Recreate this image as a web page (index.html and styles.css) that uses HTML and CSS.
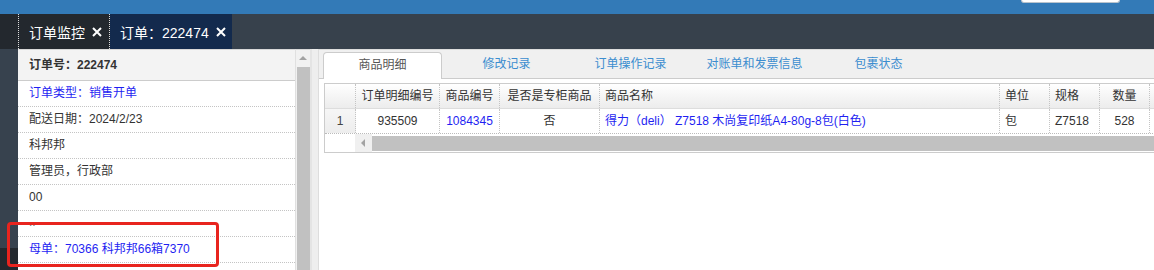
FILE: index.html
```html
<!DOCTYPE html>
<html lang="zh">
<head>
    <meta charset="UTF-8">
    <title>订单：222474</title>
    <link rel="stylesheet" href="styles.css">
</head>
<body>
    <!-- Barra superior -->
    <div class="topbar">
        <div class="top-search"></div>
    </div>

    <!-- Pestañas de páginas -->
    <div class="pagetabs">
        <div class="pagetabs-lead"></div>
        <div class="pagetab pagetab-dark">订单监控
            <svg class="close" width="10" height="10" viewBox="0 0 10 10"><path d="M1 1L9 9M9 1L1 9" stroke="#fff" stroke-width="2"/></svg>
        </div>
        <div class="pagetab pagetab-active">订单：222474
            <svg class="close" width="10" height="10" viewBox="0 0 10 10"><path d="M1 1L9 9M9 1L1 9" stroke="#fff" stroke-width="2"/></svg>
        </div>
    </div>

    <div class="main">
        <div class="side"></div>

        <!-- Info del pedido -->
        <div class="order-info">
            <div class="info-head">订单号：222474</div>
            <div class="info-row link">订单类型：销售开单</div>
            <div class="info-row">配送日期：2024/2/23</div>
            <div class="info-row">科邦邦</div>
            <div class="info-row">管理员，行政部</div>
            <div class="info-row">00</div>
            <div class="info-row dots">..</div>
            <div class="info-row link">母单：70366 科邦邦66箱7370</div>
            <div class="info-row"></div>
        </div>
        <div class="vscroll">
            <div class="vscroll-up"></div>
            <div class="vscroll-thumb"></div>
        </div>
        <div class="splitter"></div>

        <!-- Detalle -->
        <div class="detail">
            <div class="detail-tabs">
                <div class="dtab dtab-active">商品明细</div>
                <div class="dtab">修改记录</div>
                <div class="dtab">订单操作记录</div>
                <div class="dtab">对账单和发票信息</div>
                <div class="dtab">包裹状态</div>
            </div>
            <div class="grid">
                <div class="grid-row grid-head">
                    <div class="cell rn"></div>
                    <div class="cell c1 center">订单明细编号</div>
                    <div class="cell c2 center">商品编号</div>
                    <div class="cell c3 center">是否是专柜商品</div>
                    <div class="cell c4">商品名称</div>
                    <div class="cell c5">单位</div>
                    <div class="cell c5">规格</div>
                    <div class="cell c5 center">数量</div>
                    <div class="cell c6"></div>
                </div>
                <div class="grid-row grid-data">
                    <div class="cell rn rn-data">1</div>
                    <div class="cell c1 center">935509</div>
                    <div class="cell c2 center link">1084345</div>
                    <div class="cell c3 center">否</div>
                    <div class="cell c4 link">得力（deli） Z7518 木尚复印纸A4-80g-8包(白色)</div>
                    <div class="cell c5">包</div>
                    <div class="cell c5">Z7518</div>
                    <div class="cell c5 center">528</div>
                    <div class="cell c6"></div>
                </div>
                <div class="hscroll">
                    <div class="hscroll-blank"></div>
                    <div class="hscroll-left"></div>
                    <div class="hscroll-thumb"></div>
                </div>
            </div>
        </div>
    </div>

    <!-- Marca roja -->
    <div class="mark"></div>
</body>
</html>
```

FILE: styles.css
```css
body {
    margin: 0;
    width: 1154px;
    height: 270px;
    overflow: hidden;
    position: relative;
    font-family: "Liberation Sans", "Noto Sans CJK SC", sans-serif;
    font-size: 12px;
    color: #333;
    background-color: #fff;
}

/* Barra superior */
.topbar {
    height: 14px;
    background-color: #337ab7;
    display: flex;
    justify-content: flex-end;
}

.top-search {
    width: 97px;
    height: 2px;
    margin-right: 34px;
    background-color: #fff;
    border: 1px solid #b9c3cc;
    border-top: none;
    border-radius: 0 0 3px 3px;
}

/* Pestañas de páginas */
.pagetabs {
    height: 35px;
    display: flex;
    background-color: #37414c;
}

.pagetabs-lead {
    width: 18px;
    background-color: #23282e;
}

.pagetab {
    display: flex;
    align-items: center;
    gap: 7px;
    padding-left: 10px;
    color: #fff;
    font-size: 14px;
    box-sizing: border-box;
}

.pagetab-dark {
    width: 92px;
    background-color: #23282e;
    border-left: 1px dotted #ddd;
    border-right: 1px dotted #ddd;
}

.pagetab-active {
    width: 122px;
    padding-left: 10px;
    background-color: #132a4d;
}

.close {
    flex: none;
}

/* Contenido */
.main {
    display: flex;
    height: 221px;
    overflow: hidden;
}

.side {
    width: 18px;
    background: linear-gradient(#37424e 0, #37424e 199px, #23282e 199px);
}

/* Info del pedido */
.order-info {
    width: 277px;
    overflow: hidden;
    border-top: 1px solid #d8d8d8;
    border-right: 1px solid #e0e0e0;
    background-color: #fff;
}

.info-head {
    height: 30px;
    line-height: 30px;
    padding-left: 11px;
    font-weight: bold;
    background-color: #f3f3f3;
    border-bottom: 1px solid #ccc;
}

.info-row {
    height: 25px;
    line-height: 25px;
    padding-left: 11px;
    border-bottom: 1px dotted #c4c4c4;
    white-space: nowrap;
}

.link {
    color: #1f1ff2;
}

.dots {
    color: #777;
    line-height: 22px;
}

/* Scroll vertical */
.vscroll {
    width: 14px;
    display: flex;
    flex-direction: column;
    border-top: 1px solid #d8d8d8;
    background-color: #f0f0f0;
}

.vscroll-up {
    height: 17px;
    position: relative;
    background-color: #f1f1f1;
}

.vscroll-up::after {
    content: "";
    position: absolute;
    left: 3px;
    top: 6px;
    border-left: 4px solid transparent;
    border-right: 4px solid transparent;
    border-bottom: 4px solid #a3a3a3;
}

.vscroll-thumb {
    flex: 1;
    margin-left: 1px;
    background-color: #c1c1c1;
}

.splitter {
    width: 8px;
    background-color: #eee;
    border-left: 2px solid #e4e4e4;
    box-sizing: border-box;
}

/* Detalle */
.detail {
    flex: 1;
    min-width: 0;
    border-left: 1px solid #ddd;
    border-top: 1px solid #ddd;
    overflow: hidden;
}

.detail-tabs {
    height: 28px;
    display: flex;
    align-items: flex-end;
    padding-left: 4px;
    background-color: #f0f0f0;
    border-bottom: 1px solid #ccc;
}

.dtab {
    width: 119px;
    height: 27px;
    margin-right: 5px;
    margin-bottom: -1px;
    line-height: 25px;
    text-align: center;
    color: #3b8dcf;
    box-sizing: border-box;
    white-space: nowrap;
}

.dtab-active {
    color: #555;
    background-color: #fff;
    border: 1px solid #ccc;
    border-bottom: none;
    border-radius: 4px 4px 0 0;
}

/* Tabla de productos */
.grid {
    margin: 4px 0 0 5px;
    width: 1000px;
    border: 1px solid #ccc;
    border-right: none;
}

.grid-row {
    display: flex;
    height: 25px;
}

.grid-head {
    background: linear-gradient(#fff, #ececec);
    border-bottom: 1px solid #ddd;
    height: 24px;
}

.grid-data {
    border-bottom: 1px dotted #bbb;
    height: 24px;
}

.cell {
    flex: none;
    box-sizing: border-box;
    padding: 0 5px;
    line-height: 24px;
    border-right: 1px dotted #c4c4c4;
    white-space: nowrap;
    overflow: hidden;
}

.center {
    text-align: center;
    padding: 0 2px;
}

.rn {
    width: 31px;
    text-align: center;
}

.rn-data {
    background: linear-gradient(#f6f6f6, #ededed);
    color: #444;
}

.c1 { width: 84px; }
.c2 { width: 60px; }
.c3 { width: 100px; }
.c4 { width: 400px; }
.c5 { width: 50px; }
.c6 { width: 100px; }

/* Scroll horizontal */
.hscroll {
    display: flex;
    height: 18px;
}

.hscroll-blank {
    width: 30px;
    background-color: #fff;
}

.hscroll-left {
    width: 17px;
    position: relative;
    background-color: #f0f0f0;
}

.hscroll-left::after {
    content: "";
    position: absolute;
    left: 6px;
    top: 5px;
    border-top: 4px solid transparent;
    border-bottom: 4px solid transparent;
    border-right: 4px solid #a3a3a3;
}

.hscroll-thumb {
    flex: 1;
    margin: 2px 0 1px;
    background-color: #c1c1c1;
}

/* Marca roja */
.mark {
    position: absolute;
    left: 7px;
    top: 222px;
    width: 206px;
    height: 39px;
    border: 3px solid #e8241e;
    border-radius: 4px;
}
```
